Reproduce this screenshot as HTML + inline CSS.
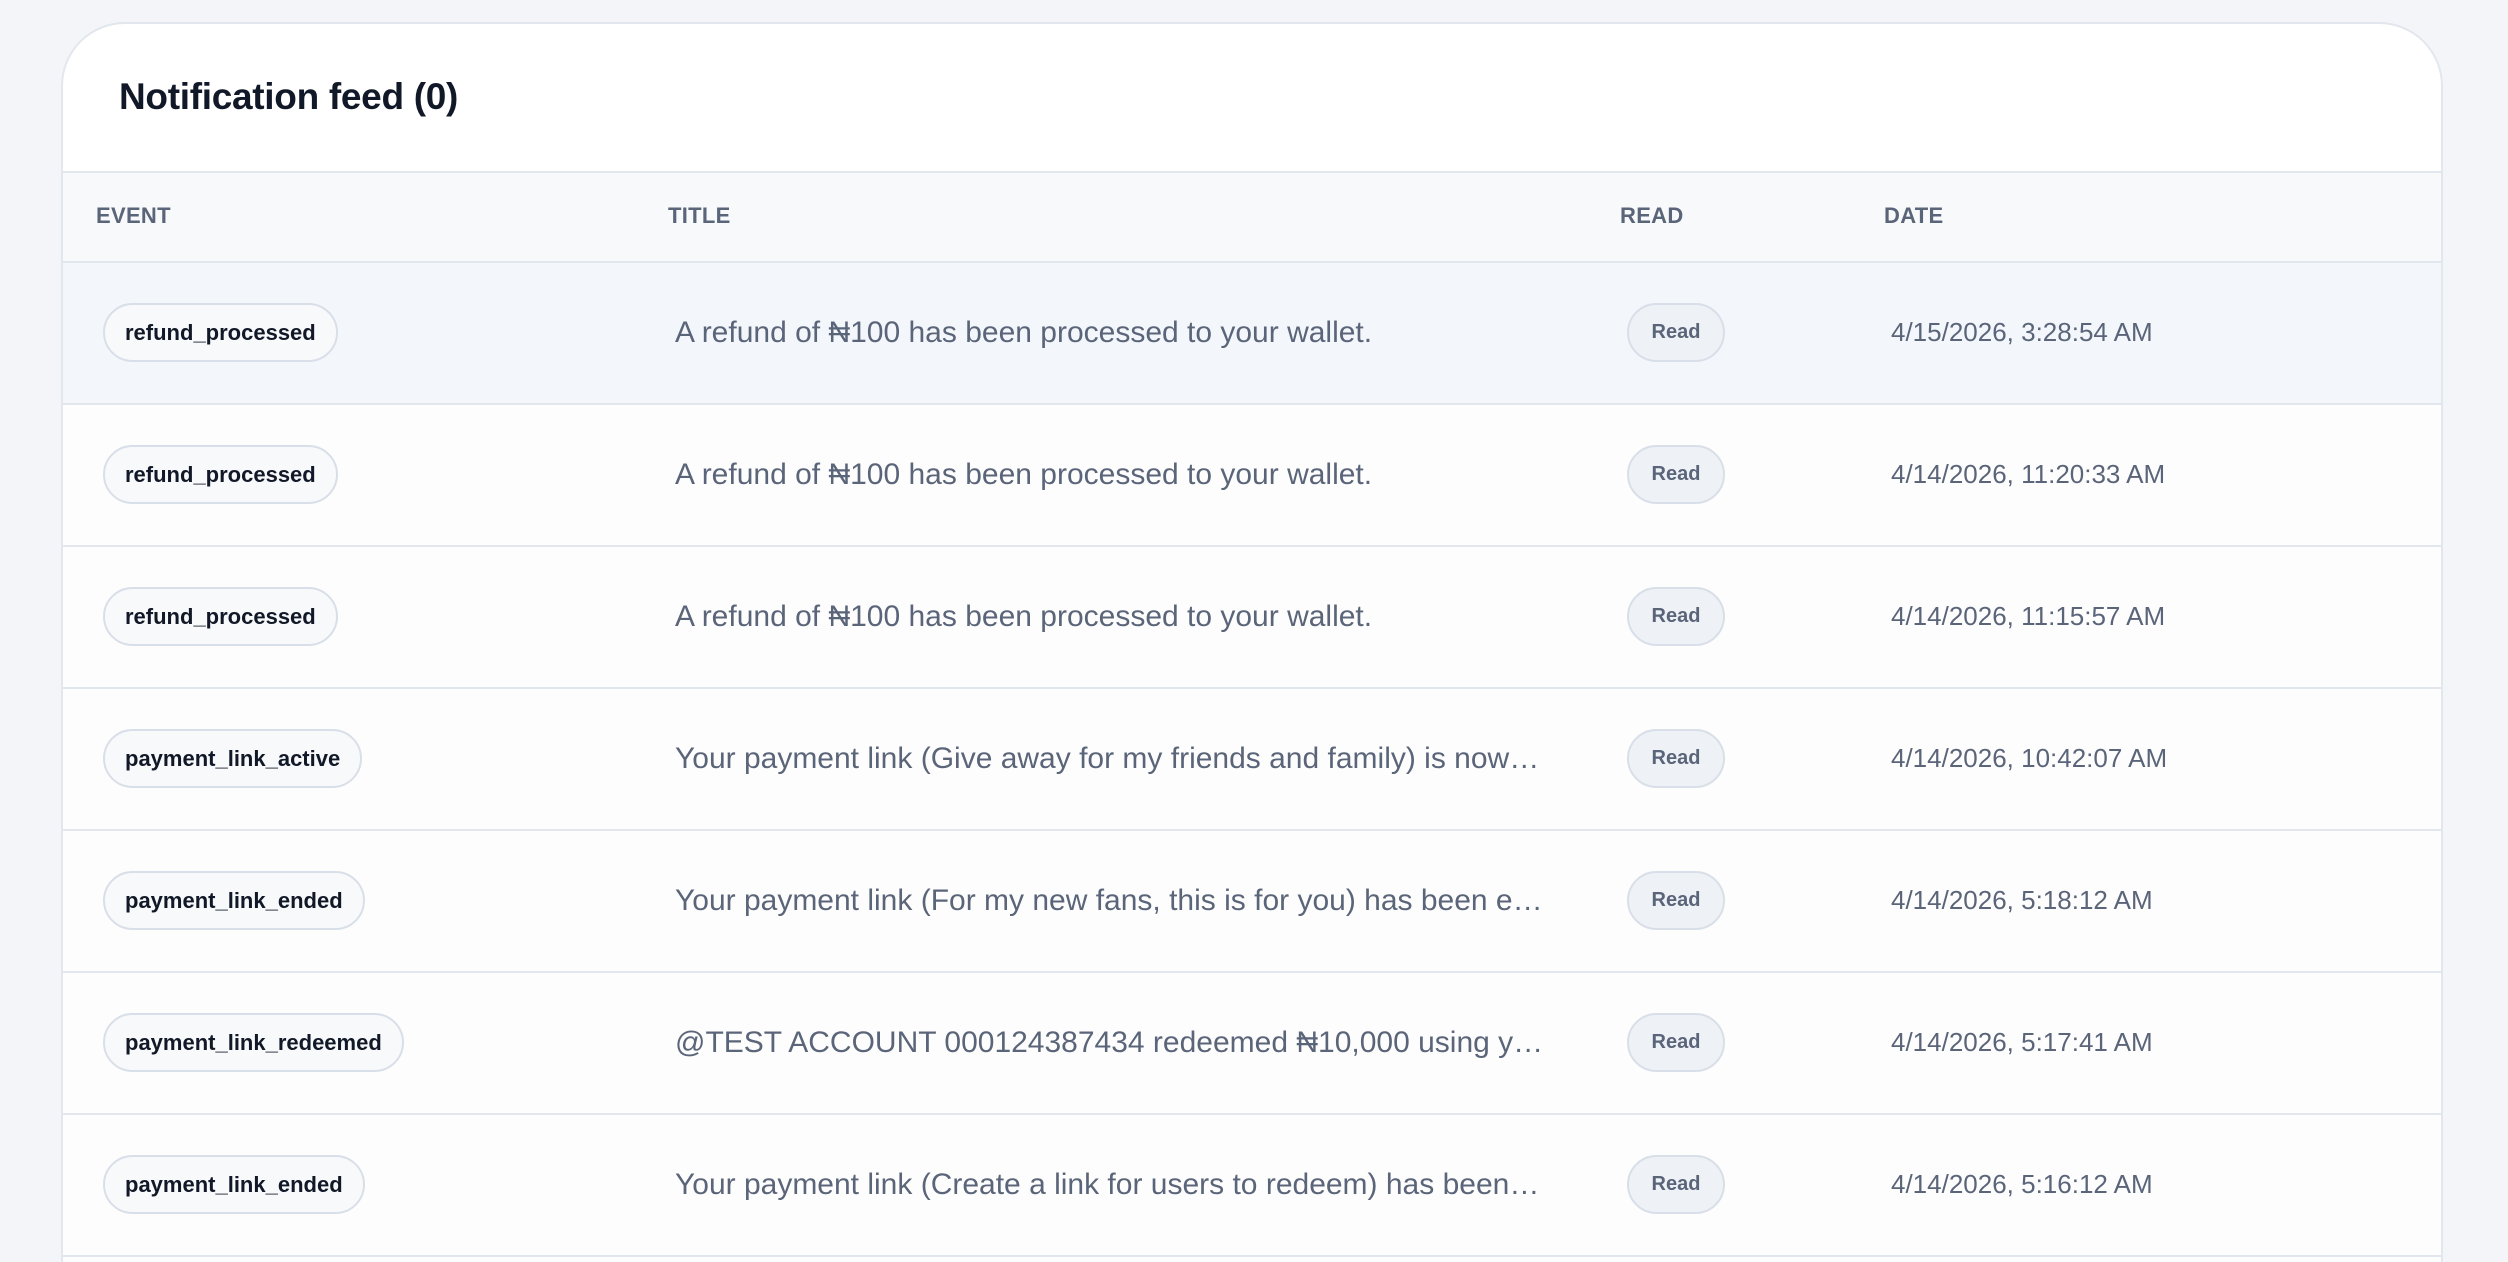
<!DOCTYPE html>
<html><head><meta charset="utf-8"><style>
*{box-sizing:border-box;margin:0;padding:0}
html,body{width:2508px;height:1262px;overflow:hidden}
body{background:#f3f5f8;font-family:"Liberation Sans",sans-serif;position:relative}
.wrap{position:absolute;left:0;top:0;width:2508px;height:1262px;overflow:hidden}
.card{position:absolute;left:61px;top:22px;width:2382px;height:1300px;background:#fff;border:2px solid #e2e7ee;border-radius:64px;overflow:hidden}
.title{position:absolute;left:56px;top:52px;font-size:37px;font-weight:700;color:#111827;letter-spacing:-0.3px}
.head{position:absolute;left:0;top:147px;width:100%;height:92px;background:#f7f9fb;border-top:2px solid #e2e7ee;border-bottom:2px solid #e2e7ee}
.head span{position:absolute;top:30px;font-size:22px;font-weight:700;color:#5b6579;letter-spacing:0.3px}
.row{position:absolute;left:0;width:100%;height:142px;background:#fdfdfd;border-bottom:2px solid #e2e7ee}
.row.hl{background:#f3f6fb}
.pill{position:absolute;left:40px;top:40px;height:59px;padding:0 20px;border:2px solid #d9dfe8;border-radius:30px;background:#f8f9fb;font-size:22px;font-weight:700;color:#111827;line-height:55px;white-space:nowrap}
.t{position:absolute;left:612px;top:52px;width:870px;font-size:30px;color:#5b6579;white-space:nowrap;overflow:hidden;text-overflow:ellipsis;line-height:36px}
.r{position:absolute;left:1564px;top:40px;width:98px;height:59px;border:2px solid #d9dfe8;border-radius:30px;background:#eef1f6;font-size:20px;font-weight:700;color:#5b6579;text-align:center;line-height:55px}
.d{position:absolute;left:1828px;top:52px;font-size:26px;color:#5b6579;line-height:34px;white-space:nowrap}
</style></head><body><div class="wrap">
<div class="card">
<div class="title">Notification feed (0)</div>
<div class="head"><span style="left:33px">EVENT</span><span style="left:605px">TITLE</span><span style="left:1557px">READ</span><span style="left:1821px">DATE</span></div>
<div class="row hl" style="top:239px"><div class="pill">refund_processed</div><div class="t">A refund of ₦100 has been processed to your wallet.</div><div class="r">Read</div><div class="d">4/15/2026, 3:28:54 AM</div></div>
<div class="row" style="top:381px"><div class="pill">refund_processed</div><div class="t">A refund of ₦100 has been processed to your wallet.</div><div class="r">Read</div><div class="d">4/14/2026, 11:20:33 AM</div></div>
<div class="row" style="top:523px"><div class="pill">refund_processed</div><div class="t">A refund of ₦100 has been processed to your wallet.</div><div class="r">Read</div><div class="d">4/14/2026, 11:15:57 AM</div></div>
<div class="row" style="top:665px"><div class="pill">payment_link_active</div><div class="t">Your payment link (Give away for my friends and family) is now active and ready to receive payments.</div><div class="r">Read</div><div class="d">4/14/2026, 10:42:07 AM</div></div>
<div class="row" style="top:807px"><div class="pill">payment_link_ended</div><div class="t">Your payment link (For my new fans, this is for you) has been ended.</div><div class="r">Read</div><div class="d">4/14/2026, 5:18:12 AM</div></div>
<div class="row" style="top:949px"><div class="pill">payment_link_redeemed</div><div class="t">@TEST ACCOUNT 000124387434 redeemed ₦10,000 using your payment link.</div><div class="r">Read</div><div class="d">4/14/2026, 5:17:41 AM</div></div>
<div class="row" style="top:1091px"><div class="pill">payment_link_ended</div><div class="t">Your payment link (Create a link for users to redeem) has been ended.</div><div class="r">Read</div><div class="d">4/14/2026, 5:16:12 AM</div></div>
<div class="row" style="top:1233px"></div>
</div>
</div></body></html>
